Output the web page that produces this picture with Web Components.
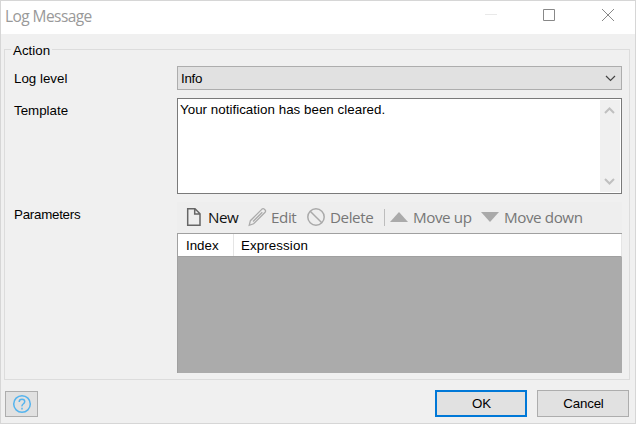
<!DOCTYPE html>
<html lang="en"><head><meta charset="utf-8"><title>Log Message</title>
<style>body{margin:0;background:#f0f0f0;overflow:hidden}</style></head><body>
<log-dialog></log-dialog>
<script>
const define=(name,html)=>{
  const t=document.createElement('template');t.innerHTML=html;
  customElements.define(name,class extends HTMLElement{
    constructor(){super();this.attachShadow({mode:'open'}).append(t.content.cloneNode(true));}
  });
};
define('title-bar',`<style>
:host{display:flex;height:33px;background:#fff;font:15.5px/30px "Open Sans","Noto Sans",sans-serif;color:#999;padding-left:4px;box-sizing:border-box}
span{flex:1;letter-spacing:-.57px}svg{display:block}
</style><span><slot></slot></span>
<svg width="160" height="33" fill="none"><path d="M10 13.5h12" stroke="#e9e9e9"/><path d="M68.500 8.500h11v11h-11z" stroke="#888"/><path d="M127 8l12 12M139 8l-12 12" stroke="#888"/></svg>`);
define('group-box',`<style>
:host{display:block;box-sizing:border-box;position:relative;border:1px solid #dcdcdc;width:626px;height:331px;margin:15px 0 0 3px;padding:16px 7px 0 9px}
.l{position:absolute;left:6px;top:-7px;line-height:16px;background:#f0f0f0;padding:0 2px}
</style><div class="l"><slot name="legend"></slot></div><slot></slot>`);
define('form-row',`<style>
:host{display:flex;align-items:flex-start}
.l{width:163px;flex:none;line-height:26px;height:24px}.c{flex:1;min-width:0}
</style><div class="l"><slot name="label"></slot></div><div class="c"><slot></slot></div>`);
define('combo-box',`<style>
:host{display:flex;box-sizing:border-box;height:24px;border:1px solid #adadad;background:#e1e1e1;padding-left:3px;line-height:23px;letter-spacing:-.3px}
span{flex:1}
</style><span><slot></slot></span><svg width="20" height="22" fill="none"><path d="M5 9l4.500 4.500L14 9" stroke="#444" stroke-width="1.200"/></svg>`);
define('text-area',`<style>
:host{display:flex;box-sizing:border-box;height:96px;border:1px solid #7a7a7a;background:#fff;padding:1px 1px 1px 2px}
span{flex:1;line-height:19px}.s{width:20px;background:#f0f0f0}svg{display:block}
</style><span><slot></slot></span><div class="s"><svg width="20" height="92" fill="none" stroke="#c0c0c0" stroke-width="2"><path d="M5 13l4.500-4.500L14 13M5 79l4.500 4.500L14 79"/></svg></div>`);
define('tool-bar',`<style>
:host{display:flex;height:31px;background:#eee;font:15.2px/31px "Open Sans","Noto Sans",sans-serif;letter-spacing:-.42px}
</style><slot></slot>`);
define('tool-button',`<style>
:host{display:flex;flex:none;color:#777;white-space:nowrap}
::slotted(svg){flex:none;display:block}
</style><slot name="icon"></slot><span><slot></slot></span>`);
define('data-grid',`<style>
:host{display:block;box-sizing:border-box;height:140px;background:#ababab;border-top:1px solid #a0a0a0;border-left:1px solid #a0a0a0}
.h{display:flex;height:22px;background:#fff;border-bottom:1px solid #a0a0a0;border-right:1px solid #e5e5e5;line-height:23px}
.a{width:56px;padding-left:8px;box-sizing:border-box;border-right:1px solid #e5e5e5;margin-right:7px}
</style><div class="h"><div class="a"><slot name="index"></slot></div><slot name="expression"></slot></div>`);
define('push-button',`<style>
:host{display:flex;box-sizing:border-box;width:92px;height:27px;border:1px solid #adadad;background:#e1e1e1;align-items:center;justify-content:center;letter-spacing:-.2px;padding-left:1px}
:host([primary]){border:2px solid #0078d7;margin-right:10px}
:host([help]){width:33px;height:26px;margin:1px auto 0 0;padding:0}
</style><slot></slot>`);
define('log-dialog',`<style>
:host{display:block;box-sizing:border-box;width:636px;height:424px;border:1px solid #d6d6d6;background:#f0f0f0;font:13.33px "Liberation Sans",Arial,sans-serif;color:#000}
.t{margin-top:8px}.p{margin-top:8px}
.t [slot=label],.p [slot=label]{display:block}
.p>[slot=label]{letter-spacing:-.25px}
footer{display:flex;margin:10px 6px 0 4px}
.m{letter-spacing:.035px}
tool-button{box-sizing:border-box}
.tri{fill:#aaa;stroke:none}
svg{fill:none}
</style>
<title-bar>Log Message</title-bar>
<group-box><span slot="legend">Action</span>
<form-row><span slot="label">Log level</span><combo-box>Info</combo-box></form-row>
<form-row class="t"><span slot="label">Template</span><text-area><span class="m">Your notification has been cleared.</span></text-area></form-row>
<form-row class="p"><span slot="label">Parameters</span>
<tool-bar>
<tool-button style="width:71px;color:#111"><svg slot="icon" width="31" height="31" stroke="#666" stroke-width="1.500"><path d="M10.700 6.700h7.300l5 5v11.600H10.700zM17.700 7v5H23"/></svg>New</tool-button>
<tool-button style="width:58px"><svg slot="icon" width="23" height="31" stroke="#aaa" stroke-width="1.300"><path d="M1.200 23.300l1.200-4.600L14 7.100q1.100-1 2.200 0l.9.900q1 1.100 0 2.200L5.600 21.800zM5 19.500L14.300 10.200"/></svg>Edit</tool-button>
<tool-button style="width:78px"><svg slot="icon" width="24" height="31" stroke="#aaa" stroke-width="1.500"><circle cx="10" cy="15" r="8.200"/><path d="M4.200 9.200l11.600 11.600"/></svg>Delete</tool-button>
<tool-button style="width:91px"><svg slot="icon" width="29" height="31"><path d="M.5 7v17" stroke="#bdbdbd"/><path class="tri" d="M6 20l9-10 9 10z"/></svg>Move up</tool-button>
<tool-button><svg slot="icon" width="29" height="31"><path class="tri" d="M6 10h18l-9 10z"/></svg>Move down</tool-button>
</tool-bar>
<data-grid><span slot="index">Index</span><span slot="expression" style="letter-spacing:.1px">Expression</span></data-grid></form-row>
</group-box>
<footer><push-button help><svg width="20" height="20" stroke="#55b4ee" stroke-width="1.500"><circle cx="10" cy="10" r="8.300"/><path d="M7.200 8q0-2.700 2.800-2.700T12.700 7.800Q12.700 9 11.200 10T10 12.300M10 13.800v1.700"/></svg></push-button><push-button primary>OK</push-button><push-button>Cancel</push-button></footer>`);
</script></body></html>
